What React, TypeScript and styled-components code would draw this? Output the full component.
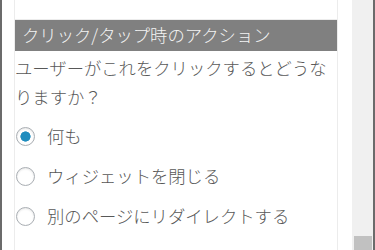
import React, { useState } from "react";
import styled, { createGlobalStyle } from "styled-components";

const GlobalStyle = createGlobalStyle`
  html, body {
    margin: 0;
    padding: 0;
    background: #ffffff;
    overflow: hidden;
  }
  body {
    font-family: "Noto Sans CJK JP", "Noto Sans", sans-serif;
  }
`;

const Page = styled.div`
  display: flex;
  width: 375px;
  height: 250px;
  background: #ffffff;
`;

const Edge = styled.div`
  width: 2px;
  flex: none;
  background: #6b6b6b;
`;

const Gutter = styled.div<{ $w: number }>`
  width: ${(p) => p.$w}px;
  flex: none;
  background: #ffffff;
`;

const Panel = styled.div`
  width: 322px;
  flex: none;
  border-left: 1px solid #ececec;
  border-right: 1px solid #ececec;
  padding-top: 19px;
  display: flex;
  flex-direction: column;
  font-size: 13pt;
  font-weight: 300;
  color: #585858;
`;

const SectionHeader = styled.div`
  height: 31px;
  line-height: 30px;
  border-top: 1px solid #ececec;
  background: #808080;
  color: #f4f4f4;
  padding-left: 7px;
  white-space: nowrap;
`;

const Question = styled.p`
  margin: 2px 0 0;
  line-height: 29px;
`;

const Options = styled.div`
  margin-top: 5px;
  display: flex;
  flex-direction: column;
`;

const OptionRow = styled.label`
  display: flex;
  align-items: center;
  height: 40px;
  gap: 12px;
  padding-left: 1px;
  cursor: pointer;
`;

const Radio = styled.input`
  appearance: none;
  -webkit-appearance: none;
  margin: 0;
  width: 19px;
  height: 19px;
  flex: none;
  border: 1px solid #a9aeb3;
  border-radius: 50%;
  background: #ffffff;
  box-shadow: inset 0 1px 2px rgba(0, 0, 0, 0.1);
  box-sizing: border-box;
  &:checked {
    background: radial-gradient(circle, #1e8cbe 0 4.8px, #ffffff 5.4px);
  }
`;

const OptionText = styled.span`
  line-height: 24px;
  white-space: nowrap;
`;

const ScrollTrack = styled.div`
  width: 21px;
  flex: none;
  background: #f0f0f0;
  display: flex;
  flex-direction: column;
  justify-content: flex-end;
  align-items: center;
`;

const ScrollThumb = styled.div`
  width: 18px;
  height: 14px;
  background: #c1c1c1;
`;

const options = ["何も", "ウィジェットを閉じる", "別のページにリダイレクトする"];

export default function App() {
  const [selected, setSelected] = useState(0);
  return (
    <>
      <GlobalStyle />
      <Page>
        <Edge />
        <Gutter $w={12} />
        <Panel>
          <SectionHeader>クリック/タップ時のアクション</SectionHeader>
          <Question>ユーザーがこれをクリックするとどうなりますか？</Question>
          <Options>
            {options.map((o, i) => (
              <OptionRow key={o}>
                <Radio
                  type="radio"
                  name="action"
                  checked={selected === i}
                  onChange={() => setSelected(i)}
                />
                <OptionText>{o}</OptionText>
              </OptionRow>
            ))}
          </Options>
        </Panel>
        <Gutter $w={14} />
        <ScrollTrack>
          <ScrollThumb />
        </ScrollTrack>
        <Edge />
      </Page>
    </>
  );
}
